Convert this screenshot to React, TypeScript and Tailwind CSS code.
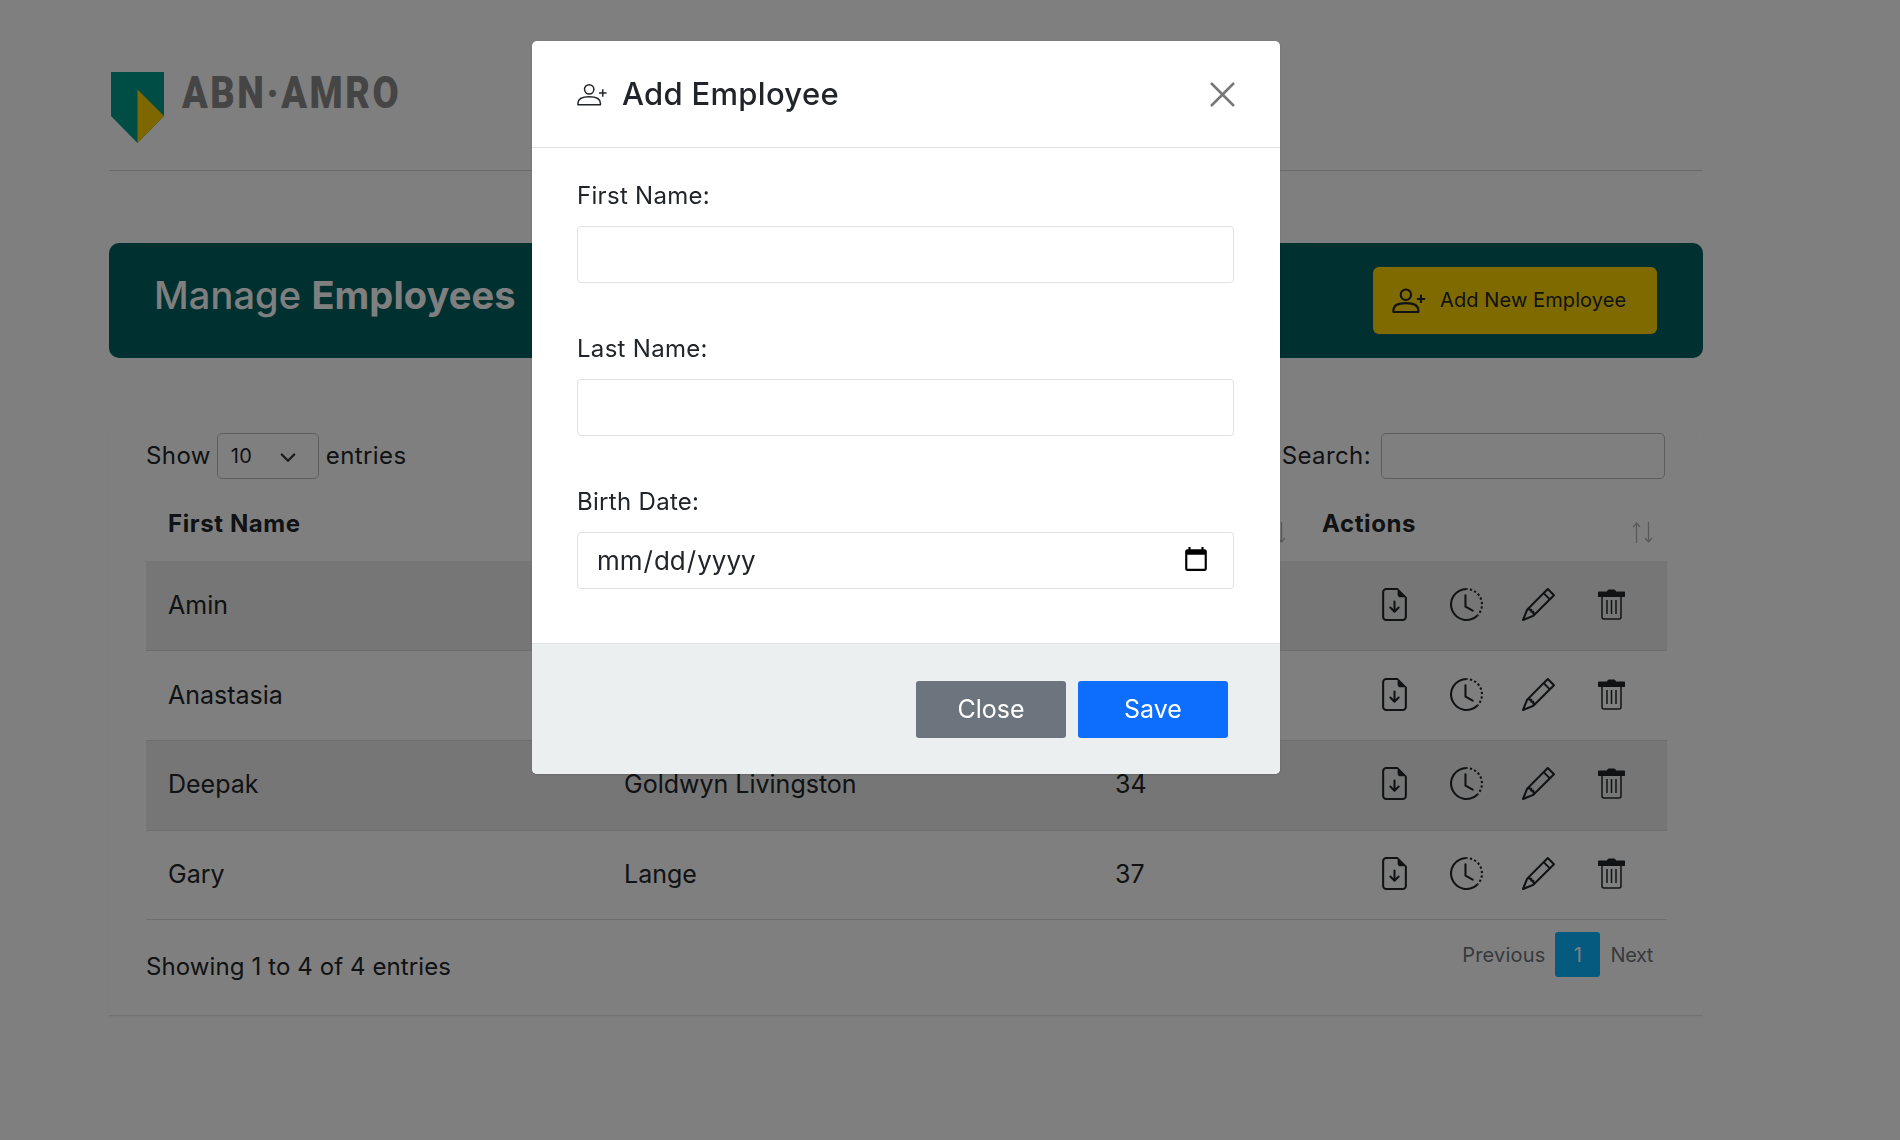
import React from "react";
import { BsFileEarmarkArrowDown, BsClockHistory, BsPencil } from "react-icons/bs";

function PersonPlus({ className, sw = 1.6 }: { className?: string; sw?: number }) {
  return (
    <svg viewBox="0 0 32 24" fill="none" stroke="currentColor" strokeWidth={sw} className={className}>
      <circle cx="13" cy="6.5" r="5" />
      <path d="M1 23v-1.5C1 17 5.5 14.5 13 14.5s12 2.5 12 7V23z" strokeLinejoin="round" />
      <path d="M23.5 10.5h8M27.5 6.5v8" />
    </svg>
  );
}

function Trash({ className }: { className?: string }) {
  return (
    <svg viewBox="0 0 27 31" className={className} fill="none" stroke="currentColor">
      <path d="M1.500 2.500h7.500c.3-1.500 1.500-2 2.500-2h4c1 0 2.200.5 2.500 2h7.500a1.500 1.500 0 0 1 0 5.500h-24a1.500 1.500 0 0 1 0-5.500z" fill="currentColor" stroke="none" />
      <path d="M4 8v20a2 2 0 0 0 2 2h15a2 2 0 0 0 2-2V8" strokeWidth="1.500" />
      <path d="M9 11v14M13.500 11v14M18 11v14" strokeWidth="1.500" />
    </svg>
  );
}

function Sort() {
  return (
    <svg viewBox="0 0 21 21" className="absolute right-[14px] top-[39px] w-[21px] h-[21px]" fill="none" stroke="#212529" strokeOpacity="0.35" strokeWidth="1.300">
      <path d="M4.500 21V1M1 5l3.500-4L8 5M16.500 0v20M13 16l3.500 4 3.500-4" />
    </svg>
  );
}

const rows = [
  ["Amin", "Khan", "29"],
  ["Anastasia", "Mueller", "41"],
  ["Deepak", "Goldwyn Livingston", "34"],
  ["Gary", "Lange", "37"],
];

function Field({ label, type = "text" }: { label: string; type?: string }) {
  return (
    <div className="mb-[49px]">
      <label className="block text-[24px] leading-[33px] mb-[14px] text-[#212529] tracking-[0.3px]">{label}</label>
      <input
        type={type}
        className="block w-[657px] h-[57px] rounded-[4px] border border-[#dee2e6] bg-white px-[18px] text-[26px] text-[#212529] [&::-webkit-calendar-picker-indicator]:w-[28px] [&::-webkit-calendar-picker-indicator]:h-[30px] [&::-webkit-calendar-picker-indicator]:mr-[5px] [&::-webkit-calendar-picker-indicator]:p-0"
      />
    </div>
  );
}

export default function App() {
  return (
    <div className="relative w-[1900px] h-[1140px] overflow-hidden bg-white text-[#212529] font-['Inter','Noto_Sans',sans-serif]">
      <div className="w-[1594px] ml-[109px]">
        <header className="h-[171px] border-b border-[#d5d5d5] pt-[72px] pl-[2px] flex items-start">
          <svg viewBox="0 0 53 71" className="w-[53px] h-[71px] shrink-0">
            <path d="M0 0h53v44L26.500 71 0 44z" fill="#009a8d" />
            <path d="M26.500 17.500 53 44 26.500 71z" fill="#ffcf00" />
          </svg>
          <span className="ml-[18px] -mt-[4px] inline-block origin-left scale-x-[0.86] whitespace-nowrap font-['Roboto',sans-serif] font-black text-[44px] leading-[50px] tracking-[3px] text-[#8b8b8b]">
            ABN·AMRO
          </span>
        </header>

        <div className="mt-[72px] h-[115px] rounded-[10px] bg-[#00615f] flex items-center justify-between pl-[45px] pr-[46px]">
          <h1 className="mb-[10px] text-[38px] font-medium text-white tracking-[0.1px] whitespace-nowrap">
            Manage <b className="font-bold">Employees</b>
          </h1>
          <button className="w-[284px] h-[67px] rounded-[6px] bg-[#ffd400] flex items-center pl-[19px] text-[#212529]">
            <PersonPlus className="w-[34px] h-[25px]" sw={2} />
            <span className="ml-[14px] mb-[2px] text-[20px] tracking-[0.1px] whitespace-nowrap">Add New Employee</span>
          </button>
        </div>

        <section className="mt-[75px] h-[583px] border-b border-[#e2e2e2] shadow-xs px-[37px]">
          <div className="flex items-center justify-between h-[46px] pr-[1px] text-[24px] tracking-[0.4px]">
            <div className="flex items-center">
              <span>Show</span>
              <div className="relative ml-[6px] w-[102px] h-[46px] rounded-[5px] border border-[#bbbbbb] flex items-center pl-[13px] text-[20px]">
                10
                <svg viewBox="0 0 16 16" className="absolute right-[20px] top-[13px] w-[20px] h-[20px]" fill="none" stroke="#343a40" strokeWidth="1.800">
                  <path d="M2.500 5.500 8 11l5.500-5.500" />
                </svg>
              </div>
              <span className="ml-[7px]">entries</span>
            </div>
            <div className="flex items-center">
              <span>Search:</span>
              <div className="ml-[10px] w-[284px] h-[46px] rounded-[5px] border border-[#bbbbbb]" />
            </div>
          </div>

          <table className="w-[1521px] table-fixed border-collapse mt-[4px]">
            <colgroup>
              <col className="w-[456px]" />
              <col className="w-[491px]" />
              <col className="w-[207px]" />
              <col className="w-[367px]" />
            </colgroup>
            <thead>
              <tr className="h-[78px] text-[24px] font-bold text-left tracking-[0.6px]">
                <th className="relative pl-[22px] pt-[4px] font-bold">First Name<Sort /></th>
                <th className="relative pl-[22px] pt-[4px] font-bold">Last Name<Sort /></th>
                <th className="relative pl-[22px] pt-[4px] font-bold">Age<Sort /></th>
                <th className="relative pl-[22px] pt-[4px] font-bold">Actions<Sort /></th>
              </tr>
            </thead>
            <tbody className="text-[25px]">
              {rows.map((r, i) => (
                <tr key={r[0]} className={`h-[89.700px] border-b border-[#dcdcdc] ${i % 2 === 0 ? "bg-[#ececec]" : ""}`}>
                  <td className="pl-[22px]">{r[0]}</td>
                  <td className="pl-[22px]">{r[1]}</td>
                  <td className="pl-[22px]">{r[2]}</td>
                  <td>
                    <div className="flex items-center justify-end pr-[42px] pb-[3px] text-[#212529]">
                      <BsFileEarmarkArrowDown className="w-[33px] h-[33px]" />
                      <BsClockHistory className="ml-[39px] w-[33px] h-[33px]" />
                      <BsPencil className="ml-[39px] w-[33px] h-[33px]" />
                      <Trash className="ml-[43px] w-[27px] h-[31px]" />
                    </div>
                  </td>
                </tr>
              ))}
            </tbody>
          </table>

          <div className="flex items-start justify-between pt-[12px]">
            <span className="mt-[17px] text-[24px] leading-[36px] tracking-[0.1px]">Showing 1 to 4 of 4 entries</span>
            <div className="flex items-center h-[45px] text-[20px] text-[#6f7478] pr-[13px] tracking-[0.2px]">
              <span>Previous</span>
              <span className="mx-[10px] w-[45px] h-[45px] rounded-[3px] bg-[#0bb5ff] flex items-center justify-center text-white">1</span>
              <span className="tracking-[-0.4px]">Next</span>
            </div>
          </div>
        </section>
      </div>

      <div className="fixed inset-0 bg-black/50" />

      <div className="fixed left-[532px] top-[41px] w-[748px] rounded-[5px] bg-white overflow-hidden shadow-sm">
        <div className="h-[107px] border-b border-[#dee2e6] flex items-center pl-[45px] pr-[45px]">
          <PersonPlus className="w-[30px] h-[23px] text-[#212529]" />
          <h2 className="ml-[15px] text-[31px] font-medium tracking-[0.3px]">Add Employee</h2>
          <svg viewBox="0 0 25 25" className="ml-auto w-[25px] h-[25px]" fill="none" stroke="#777777" strokeWidth="2.500">
            <path d="M1 1l23 23M24 1 1 24" />
          </svg>
        </div>
        <div className="pt-[31px] px-[45px] h-[495px]">
          <Field label="First Name:" />
          <Field label="Last Name:" />
          <Field label="Birth Date:" type="date" />
        </div>
        <div className="h-[131px] bg-[#ebeff0] border-t border-[#dee2e6] flex items-start justify-end pt-[37px] pr-[52px] gap-[12px]">
          <button className="w-[150px] h-[57px] rounded-[3px] bg-[#6c757d] text-white text-[25px]">Close</button>
          <button className="w-[150px] h-[57px] rounded-[3px] bg-[#0d6efd] text-white text-[25px]">Save</button>
        </div>
      </div>
    </div>
  );
}
